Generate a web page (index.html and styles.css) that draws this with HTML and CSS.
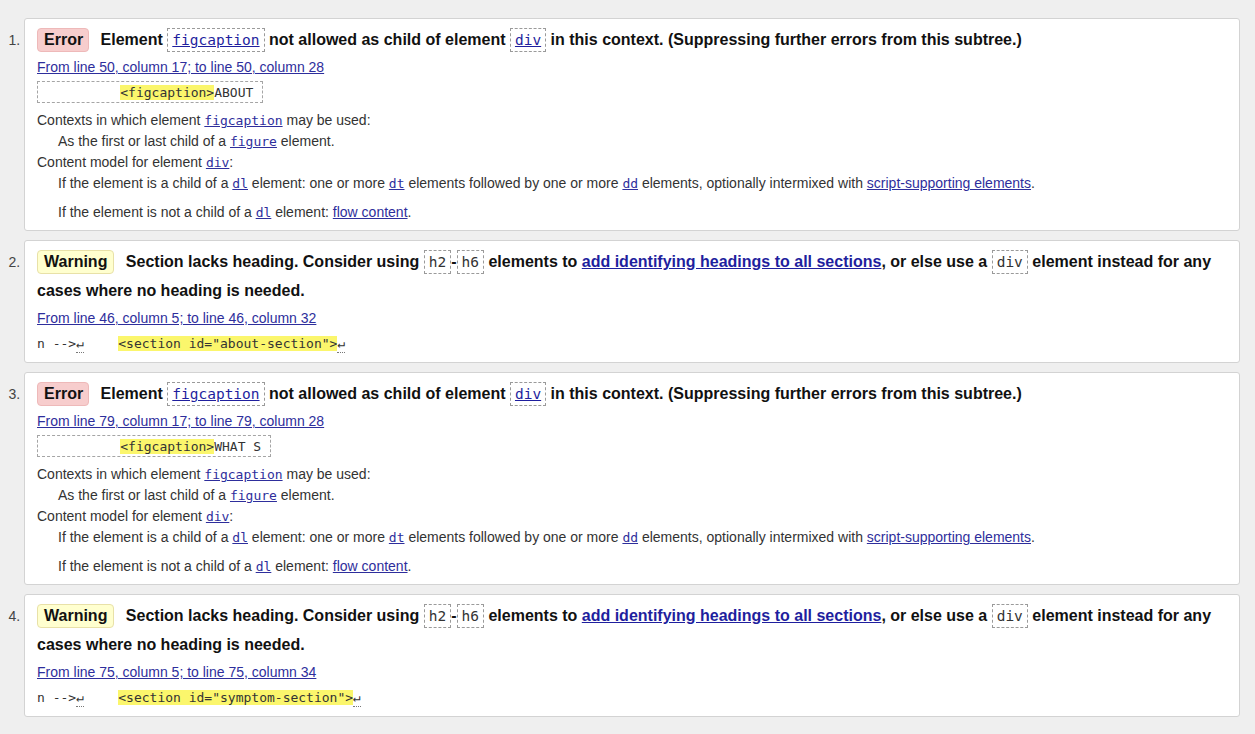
FILE: index.html
```html
<!DOCTYPE html>
<html lang="en">
<head>
<meta charset="utf-8">
<title>Validation messages</title>
<link rel="stylesheet" href="styles.css">
</head>
<body>
<ol class="messages">
  <li class="msg">
    <p class="msg-head"><span class="badge badge-error">Error</span> Element <code class="c-inline"><a href="#">figcaption</a></code> not allowed as child of element <code class="c-inline"><a href="#">div</a></code> in this context. (Suppressing further errors from this subtree.)</p>
    <p class="location"><a href="#">From line 50, column 17; to line 50, column 28</a></p>
    <div class="extract boxed"><code>          <mark>&lt;figcaption&gt;</mark>ABOUT</code></div>
    <dl class="details">
      <dt>Contexts in which element <code><a href="#">figcaption</a></code> may be used:</dt>
      <dd>As the first or last child of a <code><a href="#">figure</a></code> element.</dd>
      <dt>Content model for element <code><a href="#">div</a></code>:</dt>
      <dd>If the element is a child of a <code><a href="#">dl</a></code> element: one or more <code><a href="#">dt</a></code> elements followed by one or more <code><a href="#">dd</a></code> elements, optionally intermixed with <a href="#">script-supporting elements</a>.</dd>
      <dd class="gap">If the element is not a child of a <code><a href="#">dl</a></code> element: <a href="#">flow content</a>.</dd>
    </dl>
  </li>
  <li class="msg">
    <p class="msg-head"><span class="badge badge-warning">Warning</span> Section lacks heading. Consider using <code class="c-inline">h2</code>-<code class="c-inline">h6</code> elements to <a href="#">add identifying headings to all sections</a>, or else use a <code class="c-inline">div</code> element instead for any cases where no heading is needed.</p>
    <p class="location"><a href="#">From line 46, column 5; to line 46, column 32</a></p>
    <div class="extract"><code>n --&gt;<span class="lf">↵</span>    <mark>&lt;section id="about-section"&gt;</mark><span class="lf">↵</span></code></div>
  </li>
  <li class="msg">
    <p class="msg-head"><span class="badge badge-error">Error</span> Element <code class="c-inline"><a href="#">figcaption</a></code> not allowed as child of element <code class="c-inline"><a href="#">div</a></code> in this context. (Suppressing further errors from this subtree.)</p>
    <p class="location"><a href="#">From line 79, column 17; to line 79, column 28</a></p>
    <div class="extract boxed"><code>          <mark>&lt;figcaption&gt;</mark>WHAT S</code></div>
    <dl class="details">
      <dt>Contexts in which element <code><a href="#">figcaption</a></code> may be used:</dt>
      <dd>As the first or last child of a <code><a href="#">figure</a></code> element.</dd>
      <dt>Content model for element <code><a href="#">div</a></code>:</dt>
      <dd>If the element is a child of a <code><a href="#">dl</a></code> element: one or more <code><a href="#">dt</a></code> elements followed by one or more <code><a href="#">dd</a></code> elements, optionally intermixed with <a href="#">script-supporting elements</a>.</dd>
      <dd class="gap">If the element is not a child of a <code><a href="#">dl</a></code> element: <a href="#">flow content</a>.</dd>
    </dl>
  </li>
  <li class="msg">
    <p class="msg-head"><span class="badge badge-warning">Warning</span> Section lacks heading. Consider using <code class="c-inline">h2</code>-<code class="c-inline">h6</code> elements to <a href="#">add identifying headings to all sections</a>, or else use a <code class="c-inline">div</code> element instead for any cases where no heading is needed.</p>
    <p class="location"><a href="#">From line 75, column 5; to line 75, column 34</a></p>
    <div class="extract"><code>n --&gt;<span class="lf">↵</span>    <mark>&lt;section id="symptom-section"&gt;</mark><span class="lf">↵</span></code></div>
  </li>
</ol>
</body>
</html>
```
FILE: styles.css
```css
html, body {
  margin: 0;
  padding: 0;
}
body {
  background: #efefef;
  font-family: "Liberation Sans", Arial, sans-serif;
  color: #222;
}
.messages {
  margin: 18px 15px 0 24px;
  padding: 0;
}
.msg {
  background: #fff;
  border: 1px solid #d3d3d3;
  border-radius: 3px;
  padding: 6px 12px 8px 12px;
  margin-bottom: 9px;
  font-size: 14px;
  color: #333;
}
.msg::marker {
  color: #444;
}
.msg-head {
  margin: 0;
  font-weight: bold;
  font-size: 16px;
  line-height: 29px;
  color: #111;
}
.badge {
  display: inline-block;
  line-height: 20px;
  padding: 1px 6px;
  border: 1px solid;
  border-radius: 4px;
  margin-right: 7px;
}
.badge-error {
  background: #f7cdcd;
  border-color: #eeb9b9;
  padding: 1px 5px 1px 6px;
}
.badge-warning {
  background: #ffffcf;
  border-color: #e8e1a8;
}
code {
  font-family: "DejaVu Sans Mono", monospace;
  font-size: 13px;
  line-height: 1;
}
.c-inline {
  font-size: 14.5px;
  font-weight: normal;
  color: #333;
  border: 1px dashed #9a9a9a;
  padding: 3px 4px;
}
a {
  color: #2e2e9c;
  text-decoration: underline;
}
.msg-head a {
  color: #1f1f9e;
}
.location {
  margin: 2px 0 0;
  line-height: 22px;
}
.extract {
  margin: 3px 0 0;
  line-height: 22px;
  white-space: pre;
  color: #333;
}
.extract.boxed {
  width: fit-content;
  line-height: 20px;
  border: 1px dashed #a5a5a5;
  padding: 0 9px 0 4px;
}
mark {
  background: #fbf66c;
  color: #333;
}
.lf {
  border-bottom: 1px dotted #777;
  padding-bottom: 1px;
  margin-right: 3px;
}
.details {
  margin: 7px 0 -1px;
  line-height: 21px;
}
.details dt,
.details dd {
  margin: 0;
}
.details dd {
  margin-left: 21px;
}
.details dd.gap {
  margin-top: 8px;
}
```
